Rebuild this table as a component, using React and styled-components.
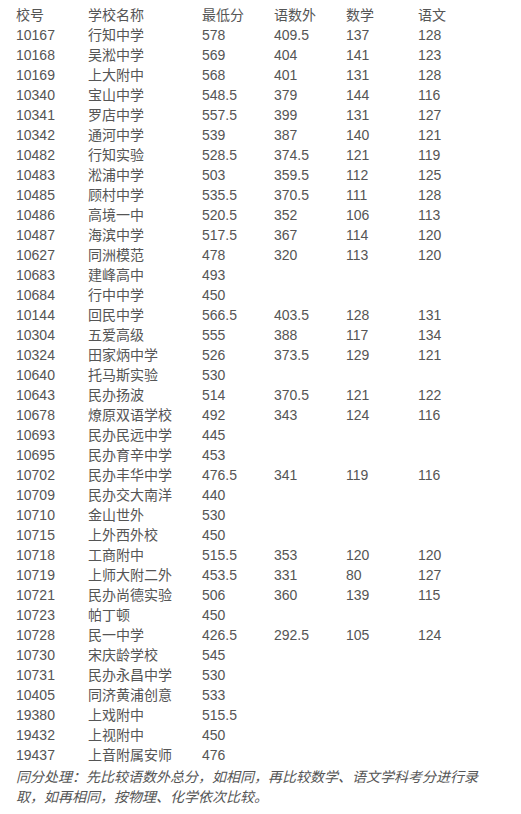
import React from 'react'
import styled, { createGlobalStyle } from 'styled-components'

const GlobalStyle = createGlobalStyle`
  html, body {
    margin: 0;
    padding: 0;
    background: #fff;
  }
  body {
    font-family: 'Liberation Sans', Arial, 'Noto Sans CJK SC', sans-serif;
    font-size: 14px;
    color: #555;
  }
`

const Page = styled.div`
  padding: 5px 16px 0;
  width: 470px;
`

const ScoreTable = styled.table`
  border-collapse: collapse;
  table-layout: fixed;
  width: 474px;
`

const Cell = styled.td`
  height: 20px;
  line-height: 20px;
  padding: 0;
  text-align: left;
  vertical-align: middle;
  white-space: nowrap;
  width: ${p => p.$w}px;
`

const HeadCell = styled(Cell).attrs({ as: 'th' })`
  font-weight: normal;
`

const Note = styled.p`
  font-style: italic;
  line-height: 20px;
  margin: 2px 0 0;
`

const widths = [72, 114, 72, 72, 72, 72]
const header = ['校号', '学校名称', '最低分', '语数外', '数学', '语文']

const rows = [
  ['10167', '行知中学', '578', '409.5', '137', '128'],
  ['10168', '吴淞中学', '569', '404', '141', '123'],
  ['10169', '上大附中', '568', '401', '131', '128'],
  ['10340', '宝山中学', '548.5', '379', '144', '116'],
  ['10341', '罗店中学', '557.5', '399', '131', '127'],
  ['10342', '通河中学', '539', '387', '140', '121'],
  ['10482', '行知实验', '528.5', '374.5', '121', '119'],
  ['10483', '淞浦中学', '503', '359.5', '112', '125'],
  ['10485', '顾村中学', '535.5', '370.5', '111', '128'],
  ['10486', '高境一中', '520.5', '352', '106', '113'],
  ['10487', '海滨中学', '517.5', '367', '114', '120'],
  ['10627', '同洲模范', '478', '320', '113', '120'],
  ['10683', '建峰高中', '493'],
  ['10684', '行中中学', '450'],
  ['10144', '回民中学', '566.5', '403.5', '128', '131'],
  ['10304', '五爱高级', '555', '388', '117', '134'],
  ['10324', '田家炳中学', '526', '373.5', '129', '121'],
  ['10640', '托马斯实验', '530'],
  ['10643', '民办扬波', '514', '370.5', '121', '122'],
  ['10678', '燎原双语学校', '492', '343', '124', '116'],
  ['10693', '民办民远中学', '445'],
  ['10695', '民办育辛中学', '453'],
  ['10702', '民办丰华中学', '476.5', '341', '119', '116'],
  ['10709', '民办交大南洋', '440'],
  ['10710', '金山世外', '530'],
  ['10715', '上外西外校', '450'],
  ['10718', '工商附中', '515.5', '353', '120', '120'],
  ['10719', '上师大附二外', '453.5', '331', '80', '127'],
  ['10721', '民办尚德实验', '506', '360', '139', '115'],
  ['10723', '帕丁顿', '450'],
  ['10728', '民一中学', '426.5', '292.5', '105', '124'],
  ['10730', '宋庆龄学校', '545'],
  ['10731', '民办永昌中学', '530'],
  ['10405', '同济黄浦创意', '533'],
  ['19380', '上戏附中', '515.5'],
  ['19432', '上视附中', '450'],
  ['19437', '上音附属安师', '476'],
]

export default function App() {
  return (
    <Page>
      <GlobalStyle />
      <ScoreTable>
        <thead>
          <tr>
            {header.map((h, i) => (
              <HeadCell key={h} $w={widths[i]}>
                {h}
              </HeadCell>
            ))}
          </tr>
        </thead>
        <tbody>
          {rows.map(r => (
            <tr key={r[0]}>
              {widths.map((w, i) => (
                <Cell key={i} $w={w}>
                  {r[i] || ''}
                </Cell>
              ))}
            </tr>
          ))}
        </tbody>
      </ScoreTable>
      <Note>
        同分处理：先比较语数外总分，如相同，再比较数学、语文学科考分进行录取，如再相同，按物理、化学依次比较。
      </Note>
    </Page>
  )
}
